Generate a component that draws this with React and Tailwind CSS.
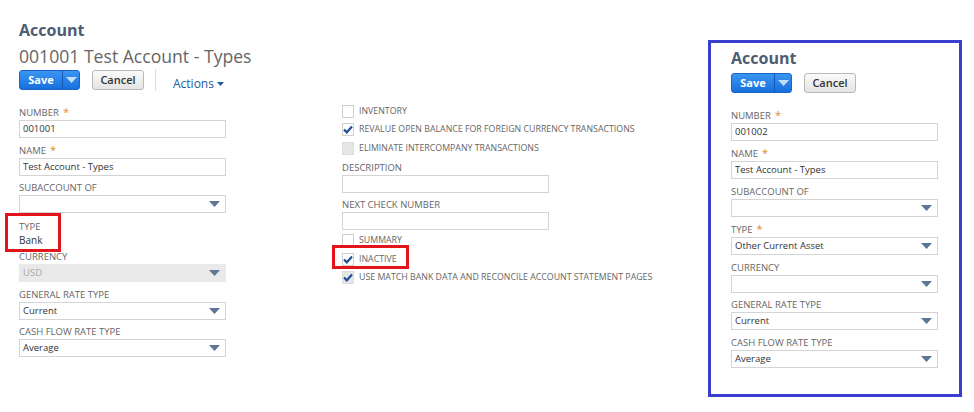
import React from 'react';

const LABEL = 'text-[9.5px] leading-[14px] uppercase text-[#666] whitespace-nowrap';

function Arrow({ color = '#5d7596' }) {
    return (
        <svg width="11" height="6" viewBox="0 0 11 6" className="shrink-0">
            <path d="M0 0 H11 L5.5 6 Z" fill={color} />
        </svg>
    );
}

function Label({ text, required }) {
    return (
        <div className={LABEL}>
            {text}
            {required && <span className="text-[#e08a1e] ml-[4px] text-[11px] leading-[10px]">*</span>}
        </div>
    );
}

function TextField({ label, required, value, gap = 'mb-[5px]' }) {
    return (
        <div className={gap}>
            <Label text={label} required={required} />
            <div className="h-[18px] border border-[#d4d4d4] bg-white px-[3px] flex items-center text-[9.5px] text-[#333]">
                {value}
            </div>
        </div>
    );
}

function SelectField({ label, required, value, disabled, gap = 'mb-[5px]' }) {
    return (
        <div className={gap}>
            <Label text={label} required={required} />
            <div className={`h-[18px] border flex items-center justify-between pl-[3px] pr-[5px] text-[9.5px] ${disabled ? 'bg-[#e9e9e9] border-[#e9e9e9] text-[#aaa]' : 'bg-white border-[#d4d4d4] text-[#333]'}`}>
                <span>{value}</span>
                <Arrow />
            </div>
        </div>
    );
}

function Checkbox({ label, checked, disabled }) {
    return (
        <div className="flex items-center h-[18.5px]">
            <div className={`w-[12px] h-[13px] shrink-0 border flex items-center justify-center ${disabled ? 'bg-[#e6e6e6] border-[#dcdcdc]' : 'bg-white border-[#cfcfcf]'}`}>
                {checked && (
                    <svg width="10" height="9" viewBox="0 0 10 9">
                        <path d="M1 4.5 L3.8 7.3 L9 1.5" stroke="#1f4f94" strokeWidth="2.2" fill="none" />
                    </svg>
                )}
            </div>
            <span className="ml-[5px] text-[8.8px] uppercase text-[#666] whitespace-nowrap">{label}</span>
        </div>
    );
}

function SaveButtons() {
    return (
        <div className="flex items-center">
            <div className="flex h-[20px] w-[61px] rounded-[3px] border border-[#1a64c8] bg-gradient-to-b from-[#3b95f2] to-[#1670dd] text-white">
                <div className="w-[42px] flex items-center justify-center text-[11px] font-bold">Save</div>
                <div className="flex-1 border-l border-[#1458b3] flex items-center justify-center">
                    <Arrow color="#c4dcf7" />
                </div>
            </div>
            <div className="ml-[12px] h-[20px] w-[52px] rounded-[3px] border border-[#b9b9b9] bg-gradient-to-b from-[#fafafa] to-[#e4e4e4] flex items-center justify-center text-[11px] font-semibold text-[#333]">
                Cancel
            </div>
        </div>
    );
}

export default function App() {
    return (
        <div className="w-[974px] h-[412px] bg-white relative flex font-['Open_Sans',sans-serif] overflow-hidden">
            {/* main record */}
            <div className="w-[708px] pl-[19px] pt-[20px]">
                <div className="text-[16px] leading-[20px] font-bold text-[#4d5c73]">Account</div>
                <div className="mt-[5px] text-[17.6px] leading-[22px] text-[#666]">001001 Test Account - Types</div>
                <div className="mt-[3px] flex items-center h-[20px]">
                    <SaveButtons />
                    <div className="ml-[11px] w-px h-[22px] bg-[#dcdcdc]" />
                    <div className="ml-[17px] mt-[7px] flex items-center text-[12px] text-[#24589e]">
                        Actions
                        <svg width="7" height="4" viewBox="0 0 7 4" className="ml-[3px]">
                            <path d="M0 0 H7 L3.5 4 Z" fill="#24589e" />
                        </svg>
                    </div>
                </div>

                <div className="mt-[16px] flex">
                    <div className="w-[207px]">
                        <TextField label="Number" required value="001001" gap="mb-[6px]" />
                        <TextField label="Name" required value="Test Account - Types" />
                        <SelectField label="Subaccount of" value="" />
                        <div className="mt-[7px] mb-[4px]">
                            <div className={LABEL}>Type</div>
                            <div className="text-[10px] leading-[12px] text-[#333]">Bank</div>
                        </div>
                        <SelectField label="Currency" value="USD" disabled gap="mb-[6px]" />
                        <SelectField label="General rate type" value="Current" />
                        <SelectField label="Cash flow rate type" value="Average" />
                    </div>

                    <div className="ml-[116px] w-[207px] -mt-[4px]">
                        <Checkbox label="Inventory" />
                        <Checkbox label="Revalue open balance for foreign currency transactions" checked />
                        <Checkbox label="Eliminate intercompany transactions" disabled />
                        <div className="mt-[3px]">
                            <TextField label="Description" value="" />
                            <TextField label="Next check number" value="" />
                        </div>
                        <div className="-mt-[3px]">
                            <Checkbox label="Summary" />
                            <Checkbox label="Inactive" checked />
                            <Checkbox label="Use match bank data and reconcile account statement pages" checked disabled />
                        </div>
                    </div>
                </div>
            </div>

            {/* new record panel */}
            <div className="mt-[40px] w-[254px] h-[357px] border-[3px] border-[#3a3ecf] pl-[20px] pt-[5px]">
                <div className="text-[16px] leading-[20px] font-bold text-[#4d5c73]">Account</div>
                <div className="mt-[5px]">
                    <SaveButtons />
                </div>
                <div className="mt-[16px] w-[207px]">
                    <TextField label="Number" required value="001002" gap="mb-[6px]" />
                    <TextField label="Name" required value="Test Account - Types" gap="mb-[6px]" />
                    <SelectField label="Subaccount of" value="" gap="mb-[6px]" />
                    <SelectField label="Type" required value="Other Current Asset" gap="mb-[6px]" />
                    <SelectField label="Currency" value="" gap="mb-[5px]" />
                    <SelectField label="General rate type" value="Current" gap="mb-[6px]" />
                    <SelectField label="Cash flow rate type" value="Average" gap="mb-[6px]" />
                </div>
            </div>

            {/* annotation boxes */}
            <div className="absolute left-[5px] top-[213px] w-[56px] h-[39px] border-[3px] border-[#e4141b]" />
            <div className="absolute left-[332px] top-[245px] w-[77px] h-[24px] border-[3px] border-[#e4141b]" />
        </div>
    );
}
